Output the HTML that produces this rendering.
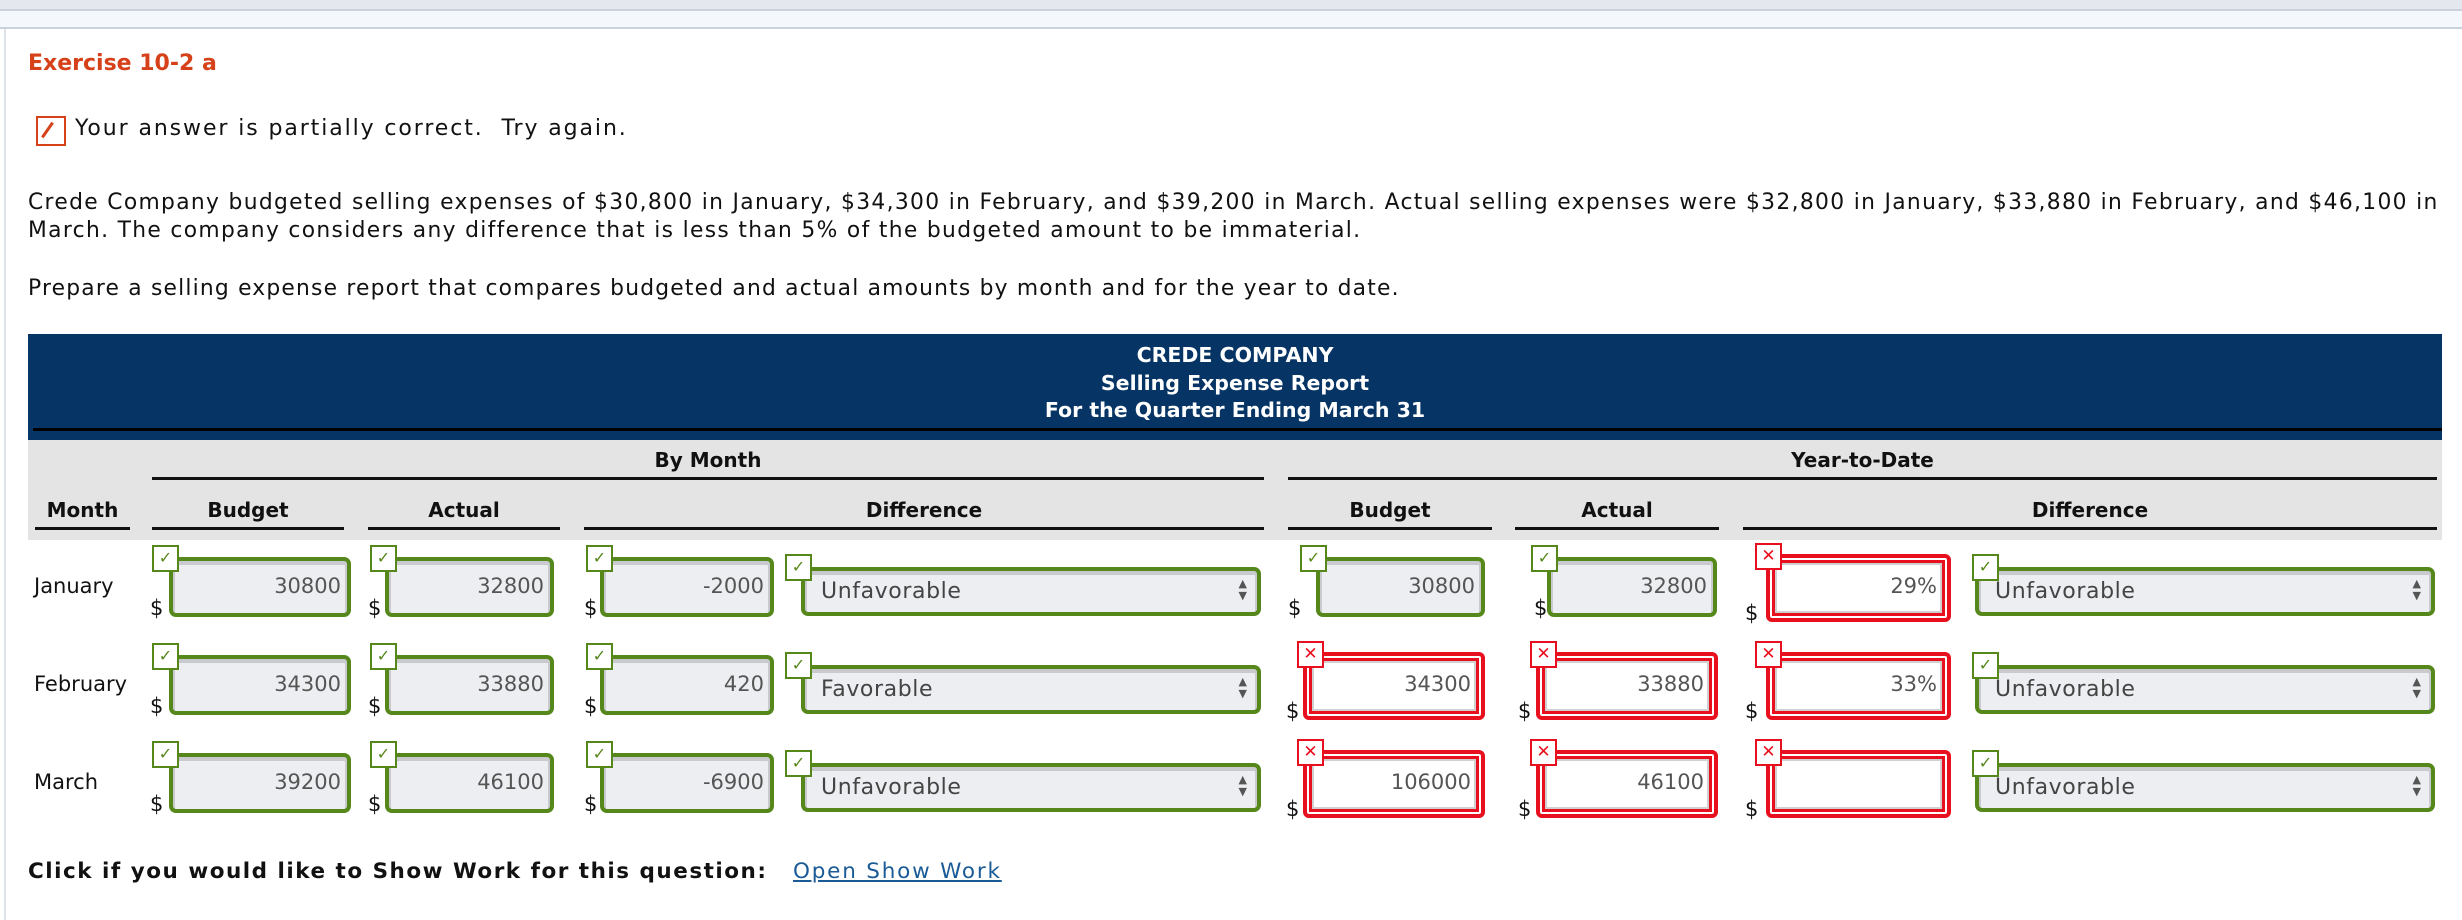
<!DOCTYPE html>
<html><head><meta charset="utf-8"><style>
*{margin:0;padding:0;box-sizing:border-box}
body{width:2462px;height:920px;background:#fff;position:relative;overflow:hidden;font-family:"DejaVu Sans","Liberation Sans",sans-serif;color:#111}
.a{position:absolute;white-space:nowrap}
.top{left:0;top:0;width:2462px;height:11px;background:#e4e8ee;border-bottom:2px solid #cbd2dc}
.band{left:0;top:11px;width:2462px;height:18px;background:#f4f7fb;border-bottom:2px solid #cbd2dc}
.lb{left:4px;top:29px;width:2px;height:891px;background:#dde2ea}
.hd{font-weight:bold;font-size:20px;text-align:center;line-height:26px;color:#111}
.ul{height:3px;background:#111}
.chk{width:27px;height:27px;border:2px solid #55871a;background:#fff;font-size:16px;color:#55871a;text-align:center;line-height:22px;font-weight:bold}
.x{border-color:#e8101e;color:#e8101e;font-size:17px}
.g{border:4px solid #55871a;border-radius:7px;background:#eceef1;box-shadow:inset 0 2px 0 2px #c8cacd;font-size:21px;color:#555;text-align:right;padding:13px 6px 0 0}
.r{border:4px solid #e8101e;border-radius:6px;background:#fff;box-shadow:inset 0 0 0 2px #fff,inset 0 0 0 5px #e8101e,inset 0 0 0 7px #d0d0d0;font-size:21px;color:#555;text-align:right;padding:16px 10px 0 0}
.dd{border:4px solid #55871a;border-radius:7px;background:#eceef1;box-shadow:inset 0 2px 0 2px #c8cacd;font-size:22px;letter-spacing:0.6px;color:#444;padding:8px 0 0 16px}
.dd span{position:absolute;right:10px;top:7px;font-size:11px;line-height:12px;color:#555;letter-spacing:0}
.d{font-size:21px;color:#111}
.lab{font-size:21px}
</style></head><body>
<div class="a top"></div><div class="a band"></div><div class="a lb"></div>
<div class="a" style="left:28px;top:51px;font-size:22px;font-weight:bold;color:#d6411a">Exercise 10-2 a</div>
<div class="a" style="left:36px;top:116px;width:30px;height:30px;border:2px solid #d6411a"></div>
<div class="a" style="left:46px;top:121px;width:3px;height:18px;background:#d6411a;transform:rotate(35deg)"></div>
<div class="a" style="left:75px;top:116px;font-size:22px;letter-spacing:1.9px">Your answer is partially correct.&nbsp; Try again.</div>
<div class="a" style="left:28px;top:189px;font-size:21.8px;line-height:28px;letter-spacing:1.33px">Crede Company budgeted selling expenses of $30,800 in January, $34,300 in February, and $39,200 in March. Actual selling expenses were $32,800 in January, $33,880 in February, and $46,100 in<br>March. The company considers any difference that is less than 5% of the budgeted amount to be immaterial.</div>
<div class="a" style="left:28px;top:276px;font-size:21.8px;letter-spacing:1.2px">Prepare a selling expense report that compares budgeted and actual amounts by month and for the year to date.</div>

<div class="a" style="left:28px;top:334px;width:2414px;height:106px;background:#063464"></div>
<div class="a" style="left:33px;top:428px;width:2409px;height:3px;background:#000"></div>
<div class="a" style="left:28px;top:342px;width:2414px;text-align:center;color:#fff;font-weight:bold;font-size:20.5px;line-height:27.5px">CREDE COMPANY<br>Selling Expense Report<br>For the Quarter Ending March 31</div>
<div class="a" style="left:28px;top:440px;width:2414px;height:100px;background:#e4e4e4"></div>
<div class="a hd" style="left:152px;top:447px;width:1112px">By Month</div>
<div class="a ul" style="left:152px;top:477px;width:1112px"></div>
<div class="a hd" style="left:1288px;top:447px;width:1149px">Year-to-Date</div>
<div class="a ul" style="left:1288px;top:477px;width:1149px"></div>
<div class="a hd" style="left:35px;top:497px;width:95px">Month</div><div class="a ul" style="left:35px;top:527px;width:95px"></div>
<div class="a hd" style="left:152px;top:497px;width:192px">Budget</div><div class="a ul" style="left:152px;top:527px;width:192px"></div>
<div class="a hd" style="left:368px;top:497px;width:192px">Actual</div><div class="a ul" style="left:368px;top:527px;width:192px"></div>
<div class="a hd" style="left:584px;top:497px;width:680px">Difference</div><div class="a ul" style="left:584px;top:527px;width:680px"></div>
<div class="a hd" style="left:1288px;top:497px;width:204px">Budget</div><div class="a ul" style="left:1288px;top:527px;width:204px"></div>
<div class="a hd" style="left:1515px;top:497px;width:204px">Actual</div><div class="a ul" style="left:1515px;top:527px;width:204px"></div>
<div class="a hd" style="left:1743px;top:497px;width:694px">Difference</div><div class="a ul" style="left:1743px;top:527px;width:694px"></div>

<!-- Row 1 -->
<div class="a lab" style="left:34px;top:574px">January</div>
<div class="a d" style="left:150px;top:596px">$</div><div class="a g" style="left:169px;top:557px;width:182px;height:60px">30800</div><div class="a chk" style="left:152px;top:545px">✓</div>
<div class="a d" style="left:368px;top:596px">$</div><div class="a g" style="left:385px;top:557px;width:169px;height:60px">32800</div><div class="a chk" style="left:370px;top:545px">✓</div>
<div class="a d" style="left:584px;top:596px">$</div><div class="a g" style="left:600px;top:557px;width:174px;height:60px">-2000</div><div class="a chk" style="left:586px;top:545px">✓</div>
<div class="a dd" style="left:801px;top:567px;width:460px;height:49px">Unfavorable<span>▲<br>▼</span></div><div class="a chk" style="left:785px;top:554px">✓</div>
<div class="a d" style="left:1288px;top:596px">$</div><div class="a g" style="left:1316px;top:557px;width:169px;height:60px">30800</div><div class="a chk" style="left:1300px;top:545px">✓</div>
<div class="a d" style="left:1534px;top:596px">$</div><div class="a g" style="left:1547px;top:557px;width:170px;height:60px">32800</div><div class="a chk" style="left:1531px;top:545px">✓</div>
<div class="a d" style="left:1745px;top:601px">$</div><div class="a r" style="left:1766px;top:554px;width:185px;height:68px">29%</div><div class="a chk x" style="left:1755px;top:543px">✕</div>
<div class="a dd" style="left:1975px;top:567px;width:460px;height:49px">Unfavorable<span>▲<br>▼</span></div><div class="a chk" style="left:1972px;top:554px">✓</div>

<!-- Row 2 -->
<div class="a lab" style="left:34px;top:672px">February</div>
<div class="a d" style="left:150px;top:694px">$</div><div class="a g" style="left:169px;top:655px;width:182px;height:60px">34300</div><div class="a chk" style="left:152px;top:643px">✓</div>
<div class="a d" style="left:368px;top:694px">$</div><div class="a g" style="left:385px;top:655px;width:169px;height:60px">33880</div><div class="a chk" style="left:370px;top:643px">✓</div>
<div class="a d" style="left:584px;top:694px">$</div><div class="a g" style="left:600px;top:655px;width:174px;height:60px">420</div><div class="a chk" style="left:586px;top:643px">✓</div>
<div class="a dd" style="left:801px;top:665px;width:460px;height:49px">Favorable<span>▲<br>▼</span></div><div class="a chk" style="left:785px;top:652px">✓</div>
<div class="a d" style="left:1286px;top:699px">$</div><div class="a r" style="left:1303px;top:652px;width:182px;height:68px">34300</div><div class="a chk x" style="left:1297px;top:641px">✕</div>
<div class="a d" style="left:1518px;top:699px">$</div><div class="a r" style="left:1536px;top:652px;width:182px;height:68px">33880</div><div class="a chk x" style="left:1530px;top:641px">✕</div>
<div class="a d" style="left:1745px;top:699px">$</div><div class="a r" style="left:1766px;top:652px;width:185px;height:68px">33%</div><div class="a chk x" style="left:1755px;top:641px">✕</div>
<div class="a dd" style="left:1975px;top:665px;width:460px;height:49px">Unfavorable<span>▲<br>▼</span></div><div class="a chk" style="left:1972px;top:652px">✓</div>

<!-- Row 3 -->
<div class="a lab" style="left:34px;top:770px">March</div>
<div class="a d" style="left:150px;top:792px">$</div><div class="a g" style="left:169px;top:753px;width:182px;height:60px">39200</div><div class="a chk" style="left:152px;top:741px">✓</div>
<div class="a d" style="left:368px;top:792px">$</div><div class="a g" style="left:385px;top:753px;width:169px;height:60px">46100</div><div class="a chk" style="left:370px;top:741px">✓</div>
<div class="a d" style="left:584px;top:792px">$</div><div class="a g" style="left:600px;top:753px;width:174px;height:60px">-6900</div><div class="a chk" style="left:586px;top:741px">✓</div>
<div class="a dd" style="left:801px;top:763px;width:460px;height:49px">Unfavorable<span>▲<br>▼</span></div><div class="a chk" style="left:785px;top:750px">✓</div>
<div class="a d" style="left:1286px;top:797px">$</div><div class="a r" style="left:1303px;top:750px;width:182px;height:68px">106000</div><div class="a chk x" style="left:1297px;top:739px">✕</div>
<div class="a d" style="left:1518px;top:797px">$</div><div class="a r" style="left:1536px;top:750px;width:182px;height:68px">46100</div><div class="a chk x" style="left:1530px;top:739px">✕</div>
<div class="a d" style="left:1745px;top:797px">$</div><div class="a r" style="left:1766px;top:750px;width:185px;height:68px"></div><div class="a chk x" style="left:1755px;top:739px">✕</div>
<div class="a dd" style="left:1975px;top:763px;width:460px;height:49px">Unfavorable<span>▲<br>▼</span></div><div class="a chk" style="left:1972px;top:750px">✓</div>

<div class="a" style="left:28px;top:859px;font-size:21.5px;font-weight:bold;letter-spacing:1.5px">Click if you would like to Show Work for this question:</div>
<div class="a" style="left:793px;top:859px;font-size:21.5px;letter-spacing:1.8px;color:#1a5a96;text-decoration:underline">Open Show Work</div>
</body></html>
